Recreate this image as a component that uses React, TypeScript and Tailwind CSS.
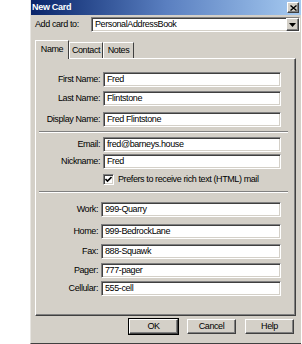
import React from 'react';

const sunken =
  'bg-white border border-t-[#808080] border-l-[#808080] border-b-white border-r-white shadow-[inset_1px_1px_0_#404040,inset_-1px_-1px_0_#d4d0c8]';
const raised =
  'bg-[#d4d0c8] border border-t-white border-l-white border-b-[#404040] border-r-[#404040] shadow-[inset_-1px_-1px_0_#808080]';
const txt = 'text-[9px] tracking-[-0.4px] text-black whitespace-nowrap leading-none';

const Field = ({ label, value, labelW, inputW, mt }: { label: string; value: string; labelW: string; inputW: string; mt: string }) => (
  <div className={`flex items-center shrink-0 ${mt}`}>
    <div className={`${labelW} shrink-0 text-right pr-[3px] ${txt}`}>{label}</div>
    <div className={`${sunken} ${inputW} shrink-0 h-[15px] flex items-center pl-[3px] ${txt}`}>{value}</div>
  </div>
);

const Separator = ({ mt }: { mt: string }) => (
  <div className={`${mt} shrink-0 ml-[3px] mr-[7px] h-[2px] border-t border-t-[#808080] border-b border-b-white`} />
);

const Btn = ({ label, def }: { label: string; def?: boolean }) => (
  <div className={def ? 'border border-black' : 'p-[1px]'}>
    <div className={`${raised} w-[49px] h-[15px] flex items-center justify-center ${txt}`}>{label}</div>
  </div>
);

const App: React.FC = () => {
  return (
    <div className="w-[302px] h-[344px] bg-white overflow-hidden" style={{ fontFamily: '"Liberation Sans", Arial, sans-serif' }}>
      <div className="ml-[30px] w-[271px] h-[344px] bg-[#d4d0c8] border-l border-l-[#e8e6e2] border-b border-b-[#404040] flex flex-col">
        {/* title bar */}
        <div className="h-[15px] shrink-0 flex items-center justify-between bg-gradient-to-r from-[#0a246a] via-[#5a7fc0] to-[#a6caf0]">
          <span className="pl-[1px] text-[9px] tracking-[-0.3px] font-bold text-white leading-none whitespace-nowrap">New Card</span>
          <div className={`${raised} w-[12px] h-[11px] mr-[2px] flex items-center justify-center`}>
            <svg width="7" height="6" viewBox="0 0 7 6">
              <path d="M0.5 0.5 L6.5 5.5 M6.5 0.5 L0.5 5.5" stroke="#000" strokeWidth="1.4" />
            </svg>
          </div>
        </div>

        {/* add card to */}
        <div className="flex items-center shrink-0 mt-[2px] pl-[4px]">
          <span className={`w-[56px] shrink-0 ${txt}`}>Add card to:</span>
          <div className={`${sunken} w-[209px] h-[15px] flex items-center justify-between pl-[3px] ${txt}`}>
            <span>PersonalAddressBook</span>
            <div className={`${raised} w-[13px] h-[13px] flex items-center justify-center`}>
              <svg width="7" height="4" viewBox="0 0 7 4">
                <path d="M0 0 H7 L3.5 4 Z" fill="#000" />
              </svg>
            </div>
          </div>
        </div>

        {/* tabs */}
        <div className="flex items-end shrink-0 mt-[7px] pl-[4px] h-[19px]">
          <div className={`relative z-10 h-[19px] w-[34px] -mb-[1px] bg-[#d4d0c8] border-t border-l border-t-white border-l-white border-r border-r-[#404040] flex items-start justify-center pt-[4px] ${txt}`}>
            Name
          </div>
          <div className={`h-[16px] w-[34px] border-t border-l border-t-white border-l-white border-r border-r-[#404040] flex items-center justify-center ${txt}`}>
            Contact
          </div>
          <div className={`h-[16px] w-[31px] border-t border-l border-t-white border-l-white border-r border-r-[#404040] flex items-center justify-center ${txt}`}>
            Notes
          </div>
        </div>

        {/* panel */}
        <div className="ml-[4px] w-[261px] h-[258px] shrink-0 border border-t-white border-l-white border-b-[#404040] border-r-[#404040] shadow-[inset_-1px_-1px_0_#808080] flex flex-col">
          <Field label="First Name:" value="Fred" labelW="w-[67px]" inputW="w-[178px]" mt="mt-[13px]" />
          <Field label="Last Name:" value="Flintstone" labelW="w-[67px]" inputW="w-[178px]" mt="mt-[4px]" />
          <Field label="Display Name:" value="Fred Flintstone" labelW="w-[67px]" inputW="w-[178px]" mt="mt-[6px]" />
          <Separator mt="mt-[4px]" />
          <Field label="Email:" value="fred@barneys.house" labelW="w-[67px]" inputW="w-[178px]" mt="mt-[4px]" />
          <Field label="Nickname:" value="Fred" labelW="w-[67px]" inputW="w-[178px]" mt="mt-[2px]" />
          <div className="flex items-center shrink-0 mt-[5px] ml-[67px] gap-[4px]">
            <div className={`${sunken} w-[11px] h-[11px] flex items-center justify-center`}>
              <svg width="7" height="7" viewBox="0 0 7 7">
                <path d="M0.5 3 L2.5 5 L6.5 1" stroke="#000" strokeWidth="1.6" fill="none" />
              </svg>
            </div>
            <span className={txt}>Prefers to receive rich text (HTML) mail</span>
          </div>
          <Separator mt="mt-[6px]" />
          <Field label="Work:" value="999-Quarry" labelW="w-[65px]" inputW="w-[180px]" mt="mt-[9px]" />
          <Field label="Home:" value="999-BedrockLane" labelW="w-[65px]" inputW="w-[180px]" mt="mt-[7px]" />
          <Field label="Fax:" value="888-Squawk" labelW="w-[65px]" inputW="w-[180px]" mt="mt-[5px]" />
          <Field label="Pager:" value="777-pager" labelW="w-[65px]" inputW="w-[180px]" mt="mt-[4px]" />
          <Field label="Cellular:" value="555-cell" labelW="w-[65px]" inputW="w-[180px]" mt="mt-[3px]" />
        </div>

        {/* buttons */}
        <div className="flex justify-end shrink-0 gap-[7px] mt-[2px] pr-[6px]">
          <Btn label="OK" def />
          <Btn label="Cancel" />
          <Btn label="Help" />
        </div>
      </div>
    </div>
  );
};

export default App;
